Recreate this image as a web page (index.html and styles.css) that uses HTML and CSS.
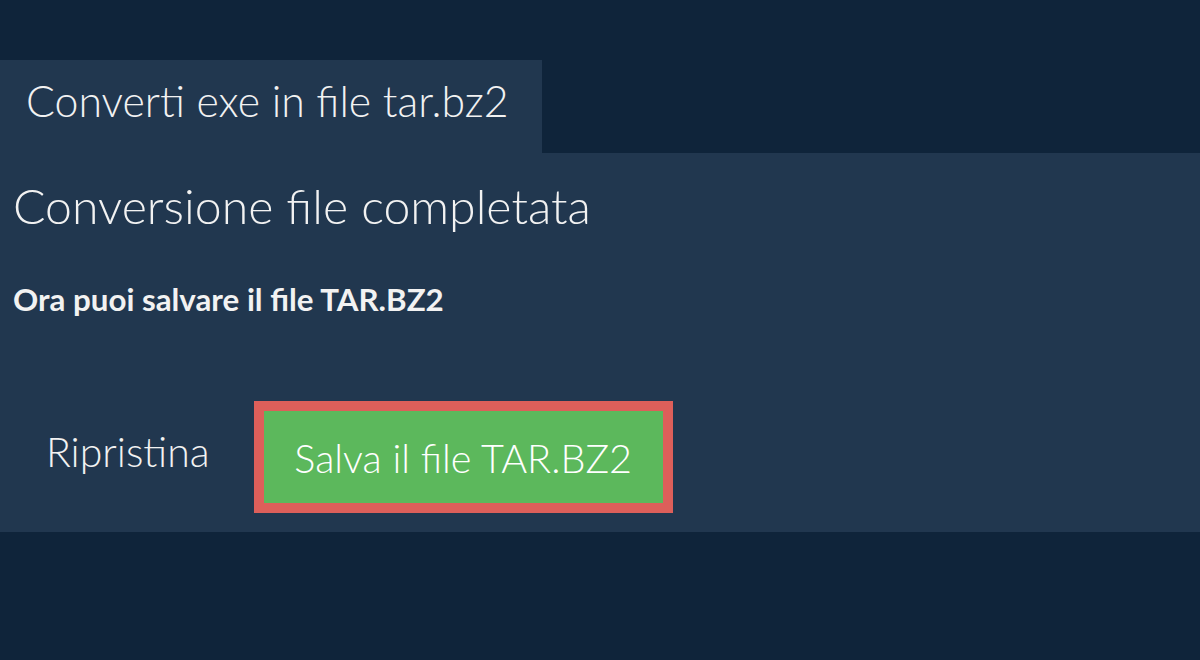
FILE: index.html
```html
<!DOCTYPE html>
<html lang="it">
<head>
<meta charset="utf-8">
<link rel="stylesheet" href="styles.css">
</head>
<body>
<div class="page">
  <div class="tab">Converti exe in file tar.bz2</div>
  <div class="panel">
    <h1 class="title">Conversione file completata</h1>
    <p class="sub">Ora puoi salvare il file TAR.BZ2</p>
    <div class="actions">
      <button class="reset">Ripristina</button>
      <button class="save">Salva il file TAR.BZ2</button>
    </div>
  </div>
</div>
</body>
</html>
```
FILE: styles.css
```css
html, body {
  margin: 0;
  padding: 0;
  background: #0f243a;
  font-family: Lato, "Open Sans", sans-serif;
  color: #f2f2f2;
}
.page {
  padding-top: 60px;
}
.tab {
  display: inline-block;
  background: #21374f;
  height: 93px;
  box-sizing: border-box;
  padding: 16px 33px 0 26px;
  font-size: 42.8px;
  font-weight: 300;
  line-height: 50px;
}
.panel {
  background: #21374f;
  height: 379px;
  box-sizing: border-box;
  padding: 22px 13px 0;
}
.title {
  margin: 0;
  font-size: 48.2px;
  font-weight: 300;
  line-height: 60px;
}
.sub {
  margin: 46px 0 0;
  font-size: 31.3px;
  font-weight: 700;
  line-height: 36px;
}
.actions {
  display: flex;
  align-items: center;
  margin-top: 84px;
}
.reset {
  background: none;
  border: none;
  color: #f2f2f2;
  font-family: inherit;
  font-size: 41px;
  font-weight: 300;
  padding: 0 33px;
  margin-top: -12px;
}
.save {
  background: #5cb85c;
  border: 10px solid #dd5f5a;
  color: #fff;
  font-family: inherit;
  font-size: 39.6px;
  font-weight: 300;
  width: 419px;
  height: 112px;
  padding: 0;
  margin-left: 11px;
}
```
